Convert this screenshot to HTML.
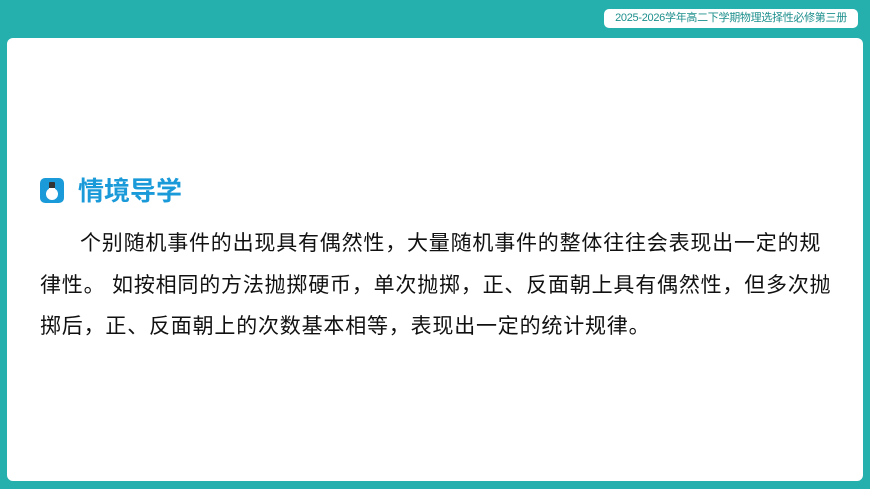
<!DOCTYPE html>
<html><head><meta charset="utf-8"><style>
body{margin:0;width:870px;height:489px;background:#25afad;position:relative;overflow:hidden;font-family:"Liberation Sans","Noto Sans CJK SC",sans-serif}
.panel{position:absolute;left:7px;top:38px;width:856px;height:443px;background:#fff;border-radius:6px}
.tag{position:absolute;left:604px;top:9px;width:254px;height:19px;background:#fff;border-radius:5px;color:#1c8f8c;font-size:11px;line-height:19px;text-align:center;white-space:nowrap;overflow:hidden;letter-spacing:-0.3px}
.icon{position:absolute;left:40px;top:178px;width:24px;height:25px;background:#1a9ad8;border-radius:5px}
.title{position:absolute;left:78px;top:174px;font-size:26px;font-weight:bold;color:#1a9ad8;line-height:34px}
.txt{position:absolute;left:40px;top:223px;width:830px;font-size:21px;line-height:41.5px;letter-spacing:0.8px;color:#111;white-space:nowrap}
</style></head><body>
<div class="tag">2025-2026学年高二下学期物理选择性必修第三册</div>
<div class="panel"></div>
<div class="icon"><svg width="24" height="25"><rect x="9" y="4" width="6" height="8" rx="1" fill="#333"/><circle cx="12" cy="16" r="6" fill="#fff"/><rect x="9" y="10" width="6" height="3" fill="#fff"/></svg></div>
<div class="title">情境导学</div>
<div class="txt"><span style="padding-left:40px"></span>个别随机事件的出现具有偶然性，大量随机事件的整体往往会表现出一定的规<br>律性。 如按相同的方法抛掷硬币，单次抛掷，正、反面朝上具有偶然性，但多次抛<br>掷后，正、反面朝上的次数基本相等，表现出一定的统计规律。</div>
</body></html>
